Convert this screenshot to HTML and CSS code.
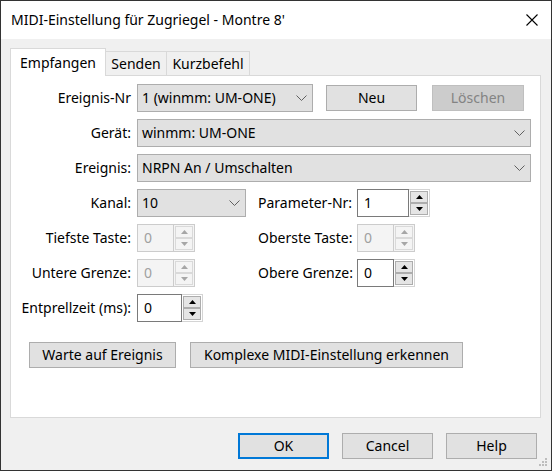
FILE: index.html
```html
<!DOCTYPE html>
<html lang="de">
<head>
<meta charset="utf-8">
<title>MIDI-Einstellung</title>
<link rel="stylesheet" href="styles.css">
</head>
<body>
<div class="window">
  <div class="titlebar">
    <span class="title">MIDI-Einstellung für Zugriegel - Montre 8'</span>
    <span class="close"><svg width="12" height="12" viewBox="0 0 12 12"><path d="M0.5 0.5 L11.5 11.5 M11.5 0.5 L0.5 11.5" stroke="#000" stroke-width="1.1" fill="none"/></svg></span>
  </div>
  <div class="content">
    <div class="tabs">
      <div class="tab active t1">Empfangen</div>
      <div class="tab t2">Senden</div>
      <div class="tab t3">Kurzbefehl</div>
    </div>
    <div class="panel">
      <div class="row">
        <span class="lbl">Ereignis-Nr</span>
        <div class="combo w-nr"><span class="ctext">1 (winmm: UM-ONE)</span><svg class="chev" width="11" height="6" viewBox="0 0 11 6"><polyline points="0.5,0.5 5.5,5.5 10.5,0.5" fill="none" stroke="#606060" stroke-width="1"/></svg></div>
        <button class="btn b-neu">Neu</button>
        <button class="btn b-del" disabled>Löschen</button>
      </div>
      <div class="row">
        <span class="lbl">Gerät:</span>
        <div class="combo w-full"><span class="ctext">winmm: UM-ONE</span><svg class="chev" width="11" height="6" viewBox="0 0 11 6"><polyline points="0.5,0.5 5.5,5.5 10.5,0.5" fill="none" stroke="#606060" stroke-width="1"/></svg></div>
      </div>
      <div class="row">
        <span class="lbl">Ereignis:</span>
        <div class="combo w-full"><span class="ctext">NRPN An / Umschalten</span><svg class="chev" width="11" height="6" viewBox="0 0 11 6"><polyline points="0.5,0.5 5.5,5.5 10.5,0.5" fill="none" stroke="#606060" stroke-width="1"/></svg></div>
      </div>
      <div class="row">
        <span class="lbl">Kanal:</span>
        <div class="slot">
          <div class="combo w-kanal"><span class="ctext">10</span><svg class="chev" width="11" height="6" viewBox="0 0 11 6"><polyline points="0.5,0.5 5.5,5.5 10.5,0.5" fill="none" stroke="#606060" stroke-width="1"/></svg></div>
        </div>
        <span class="rlbl">Parameter-Nr:</span>
        <div class="spin">
          <span class="stext w52">1</span>
          <span class="sbtns"><span class="sb"><svg width="7" height="4" viewBox="0 0 7 4"><polygon points="0,4 3.5,0 7,4" fill="#000"/></svg></span><span class="sb"><svg width="7" height="4" viewBox="0 0 7 4"><polygon points="0,0 3.5,4 7,0" fill="#000"/></svg></span></span>
        </div>
      </div>
      <div class="row">
        <span class="lbl">Tiefste Taste:</span>
        <div class="slot">
          <div class="spin off">
            <span class="stext w37">0</span>
            <span class="sbtns"><span class="sb"><svg width="7" height="4" viewBox="0 0 7 4"><polygon points="0,4 3.5,0 7,4" fill="#a6a6a6"/></svg></span><span class="sb"><svg width="7" height="4" viewBox="0 0 7 4"><polygon points="0,0 3.5,4 7,0" fill="#a6a6a6"/></svg></span></span>
          </div>
        </div>
        <span class="rlbl">Oberste Taste:</span>
        <div class="spin off">
          <span class="stext w37">0</span>
          <span class="sbtns"><span class="sb"><svg width="7" height="4" viewBox="0 0 7 4"><polygon points="0,4 3.5,0 7,4" fill="#a6a6a6"/></svg></span><span class="sb"><svg width="7" height="4" viewBox="0 0 7 4"><polygon points="0,0 3.5,4 7,0" fill="#a6a6a6"/></svg></span></span>
        </div>
      </div>
      <div class="row">
        <span class="lbl">Untere Grenze:</span>
        <div class="slot">
          <div class="spin off">
            <span class="stext w37">0</span>
            <span class="sbtns"><span class="sb"><svg width="7" height="4" viewBox="0 0 7 4"><polygon points="0,4 3.5,0 7,4" fill="#a6a6a6"/></svg></span><span class="sb"><svg width="7" height="4" viewBox="0 0 7 4"><polygon points="0,0 3.5,4 7,0" fill="#a6a6a6"/></svg></span></span>
          </div>
        </div>
        <span class="rlbl">Obere Grenze:</span>
        <div class="spin">
          <span class="stext w37">0</span>
          <span class="sbtns"><span class="sb"><svg width="7" height="4" viewBox="0 0 7 4"><polygon points="0,4 3.5,0 7,4" fill="#000"/></svg></span><span class="sb"><svg width="7" height="4" viewBox="0 0 7 4"><polygon points="0,0 3.5,4 7,0" fill="#000"/></svg></span></span>
        </div>
      </div>
      <div class="row">
        <span class="lbl">Entprellzeit (ms):</span>
        <div class="spin">
          <span class="stext w45">0</span>
          <span class="sbtns"><span class="sb"><svg width="7" height="4" viewBox="0 0 7 4"><polygon points="0,4 3.5,0 7,4" fill="#000"/></svg></span><span class="sb"><svg width="7" height="4" viewBox="0 0 7 4"><polygon points="0,0 3.5,4 7,0" fill="#000"/></svg></span></span>
        </div>
      </div>
      <div class="actions">
        <button class="btn b-wait">Warte auf Ereignis</button>
        <button class="btn b-complex">Komplexe MIDI-Einstellung erkennen</button>
      </div>
    </div>
    <div class="footer">
      <button class="btn b-foot default">OK</button>
      <button class="btn b-foot">Cancel</button>
      <button class="btn b-foot">Help</button>
    </div>
  </div>
  <svg class="grip" width="9" height="9" viewBox="0 0 9 9">
    <rect x="6" y="0" width="2" height="2" fill="#bdbdbd"/>
    <rect x="3" y="3" width="2" height="2" fill="#bdbdbd"/>
    <rect x="6" y="3" width="2" height="2" fill="#bdbdbd"/>
    <rect x="0" y="6" width="2" height="2" fill="#bdbdbd"/>
    <rect x="3" y="6" width="2" height="2" fill="#bdbdbd"/>
    <rect x="6" y="6" width="2" height="2" fill="#bdbdbd"/>
  </svg>
</div>
</body>
</html>
```

FILE: styles.css
```css
* { box-sizing: border-box; }
html, body { margin: 0; padding: 0; background: #2b2b2b; }
body {
  font-family: "Noto Sans", "Open Sans", "DejaVu Sans", sans-serif;
  font-size: 14px;
  color: #000;
}
.window {
  position: relative;
  width: 552px;
  height: 471px;
  border: 1px solid #333;
  background: #f0f0f0;
  display: flex;
  flex-direction: column;
}
.titlebar {
  height: 38px;
  background: #fff;
  display: flex;
  align-items: center;
  justify-content: space-between;
  padding: 0 13px 0 10px;
}
.title { font-size: 14px; line-height: 20px; }
.close { display: flex; align-items: center; height: 12px; }
.content {
  padding: 9px 10px 0 9px;
  display: flex;
  flex-direction: column;
}
.tabs {
  display: flex;
  align-items: flex-end;
  height: 27px;
  position: relative;
  z-index: 1;
}
.tab {
  height: 24px;
  border: 1px solid #d9d9d9;
  border-bottom: none;
  background: #f0f0f0;
  display: flex;
  align-items: center;
  justify-content: center;
  line-height: 18px;
  margin-left: -1px;
}
.tab.active {
  height: 28px;
  margin-left: 0;
  margin-bottom: -1px;
  background: #fff;
  position: relative;
  z-index: 2;
}
.t1 { width: 96px; }
.t2 { width: 62px; }
.t3 { width: 84px; }
.panel {
  height: 343px;
  background: #fff;
  border: 1px solid #d9d9d9;
  padding: 8px 0 0 0;
  display: flex;
  flex-direction: column;
  gap: 7px;
}
.row {
  height: 28px;
  display: flex;
  align-items: center;
}
.lbl {
  width: 120px;
  margin-right: 6px;
  text-align: right;
  white-space: nowrap;
  line-height: 18px;
}
.slot { width: 121px; display: flex; align-items: center; }
.rlbl { width: 99px; white-space: nowrap; line-height: 18px; }
.combo {
  height: 28px;
  background: #e1e1e1;
  border: 1px solid #adadad;
  display: flex;
  align-items: center;
  justify-content: space-between;
  padding: 0 5px 0 4px;
}
.ctext { line-height: 18px; white-space: nowrap; }
.chev { display: block; }
.w-nr { width: 176px; }
.w-full { width: 394px; }
.w-kanal { width: 109px; }
.btn {
  font-family: inherit;
  font-size: 14px;
  color: #000;
  height: 26px;
  background: #e1e1e1;
  border: 1px solid #adadad;
  padding: 0;
  line-height: 18px;
  margin: 0;
  white-space: nowrap;
}
.btn:disabled {
  background: #cccccc;
  border-color: #bfbfbf;
  color: #838383;
}
.b-neu { width: 91px; margin-left: 13px; }
.b-del { width: 92px; margin-left: 15px; }
.spin {
  height: 28px;
  display: flex;
  align-items: center;
  border: 1px solid #d4d4d4;
  background: #fff;
}
.stext {
  height: 28px;
  margin: -1px 0 -1px -1px;
  border: 1px solid #7a7a7a;
  background: #fff;
  display: flex;
  align-items: center;
  padding-left: 6px;
  line-height: 18px;
}
.spin.off { background: #f4f4f4; border-color: #cccccc; }
.spin.off .stext { border-color: #cccccc; background: #f4f4f4; color: #a0a0a0; }
.w52 { width: 52px; }
.w37 { width: 37px; }
.w45 { width: 45px; }
.sbtns {
  width: 19px;
  margin-left: 1px;
  display: flex;
  flex-direction: column;
  padding-right: 1px;
}
.sb {
  height: 12px;
  border: 1px solid #adadad;
  background: #e5e5e5;
  display: flex;
  align-items: center;
  justify-content: center;
}
.sb svg { display: block; }
.spin.off .sb { border-color: #d9d9d9; background: #f4f4f4; }
.actions {
  display: flex;
  margin-top: 13px;
  padding-left: 18px;
}
.b-wait { width: 147px; }
.b-complex { width: 273px; margin-left: 14px; }
.footer {
  display: flex;
  justify-content: flex-end;
  gap: 13px;
  margin-top: 15px;
  padding-right: 4px;
}
.b-foot { width: 91px; }
.btn.default { border: 2px solid #0078d7; }
.grip { position: absolute; right: 3px; bottom: 3px; }
```
